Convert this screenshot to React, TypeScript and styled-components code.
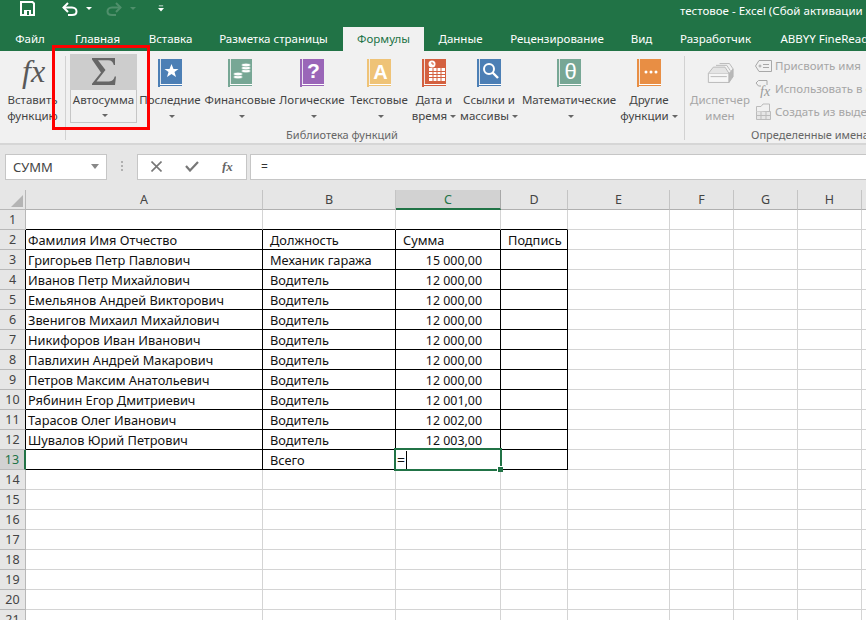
import React from "react";
import styled, { createGlobalStyle } from "styled-components";

const Global = createGlobalStyle`
  html, body { margin: 0; padding: 0; width: 866px; height: 620px; overflow: hidden; background: #fff; }
  * { box-sizing: border-box; }
`;
const UI = `"Noto Sans", "Open Sans", sans-serif`;

const Page = styled.div`width: 866px; height: 620px; overflow: hidden; display: flex; flex-direction: column; font-family: ${UI}; position: relative;`;
const TitleBar = styled.div`height: 27px; background: #217346; display: flex; align-items: flex-start; flex: none; overflow: hidden;`;
const Qat = styled.div`width: 680px; flex: none; display: flex; height: 17px; align-items: center;`;
const QatSlot = styled.span<{ $w: number }>`width: ${p => p.$w}px; flex: none; display: flex; justify-content: center; align-items: center;`;
const Title = styled.div`color: #fff; font-size: 11.5px; line-height: 22px; white-space: nowrap;`;
const Tabs = styled.div`height: 24px; background: #217346; display: flex; flex: none; overflow: hidden;`;
const Tab = styled.div<{ $w: number; $active?: boolean }>`
  width: ${p => p.$w}px; flex: none; text-align: center; font-size: 11.5px; line-height: 24px; white-space: nowrap;
  color: ${p => (p.$active ? "#217346" : "#fff")}; background: ${p => (p.$active ? "#f1f1f1" : "transparent")};
`;
const Ribbon = styled.div`height: 94px; background: #f1f1f1; border-bottom: 2px solid #d6d6d6; display: flex; flex: none; overflow: hidden;`;
const Group = styled.div<{ $w: number }>`width: ${p => p.$w}px; flex: none; display: flex; flex-direction: column;`;
const GroupRow = styled.div`display: flex; height: 77px;`;
const GroupLabel = styled.div`font-size: 11px; line-height: 14px; text-align: center; color: #666; white-space: nowrap;`;
const Sep = styled.div`width: 1px; height: 84px; margin-top: 5px; background: #d2d2d2; flex: none;`;
const Item = styled.div<{ $w: number; $ml?: number; $dim?: boolean }>`
  width: ${p => p.$w}px; margin-left: ${p => p.$ml ?? 0}px; flex: none; display: flex; flex-direction: column; align-items: center; padding-top: 8px;
  color: ${p => (p.$dim ? "#a6a6a6" : "#444")}; font-size: 11.5px; line-height: 16px; white-space: nowrap; text-align: center;
`;
const IconBox = styled.div`height: 28px; display: flex; align-items: center; justify-content: center; margin-bottom: 5px; flex: none;`;
const Caret = styled.i`display: inline-block; width: 0; height: 0; border-left: 3px solid transparent; border-right: 3px solid transparent; border-top: 3px solid #666; vertical-align: middle; margin-left: 3px;`;
const CaretLine = styled.div`height: 16px; display: flex; align-items: center; justify-content: center;`;
const Auto = styled.div`
  width: 67px; margin-left: 4px; margin-top: 3px; height: 69px; flex: none; display: flex; flex-direction: column; align-items: center;
  background: #f1f1f1; box-shadow: inset 0 -1px 0 #c6c6c6, inset 1px 0 0 #c6c6c6, inset -1px 0 0 #c6c6c6;
  color: #444; font-size: 11.5px; line-height: 16px; white-space: nowrap;
`;
const AutoTop = styled.div`width: 100%; height: 37px; background: #cdcdcd; display: flex; align-items: center; justify-content: center;`;
const AutoText = styled.div`padding-top: 2px;`;
const SmallList = styled.div`display: flex; flex-direction: column; padding-top: 3px;`;
const SmallItem = styled.div`height: 23px; display: flex; align-items: center; gap: 3px; color: #a6a6a6; font-size: 11.5px; white-space: nowrap;`;
const RedBox = styled.div`position: absolute; left: 52px; top: 45px; width: 98px; height: 85px; border: 3px solid #f00; pointer-events: none; z-index: 5;`;

const FormulaArea = styled.div`height: 45px; background: #e6e6e6; flex: none; display: flex; align-items: center; padding: 0 0 2px 5px;`;
const NameBox = styled.div`width: 102px; height: 26px; background: #fff; border: 1px solid #c6c6c6; display: flex; align-items: center; justify-content: space-between; padding: 0 7px; font-size: 13px; color: #444; flex: none;`;
const Grip = styled.div`width: 30px; display: flex; justify-content: center; flex: none;`;
const FxButtons = styled.div`width: 110px; height: 26px; background: #fff; border: 1px solid #c6c6c6; display: flex; align-items: center; flex: none;`;
const FxSlot = styled.span<{ $w: number }>`width: ${p => p.$w}px; flex: none; display: flex; justify-content: center; align-items: center;`;
const FxInput = styled.div`flex: 1; height: 26px; margin-left: 3px; background: #fff; border: 1px solid #c6c6c6; border-right: none; padding-left: 10px; line-height: 24px; font-size: 12px; color: #333;`;

const Sheet = styled.div`flex: 1; background: #fff; overflow: hidden;`;
const Row = styled.div`display: flex; height: 20px;`;
const Corner = styled.div`width: 26px; flex: none; background: #e6e6e6; border-right: 1px solid #b8b8b8; border-bottom: 1px solid #b8b8b8; position: relative; overflow: hidden;`;
const CornerMark = styled.svg`position: absolute; right: 2px; bottom: 2px;`;
const ColHead = styled.div<{ $w: number; $active?: boolean }>`
  width: ${p => p.$w}px; flex: none; font-size: 12.5px; line-height: 19px; text-align: center;
  color: ${p => (p.$active ? "#217346" : "#444")};
  background: ${p => (p.$active ? "#d2d2d2" : "#e6e6e6")};
  border-right: 1px solid ${p => (p.$active ? "#a8a8a8" : "#c4c4c4")};
  border-bottom: ${p => (p.$active ? "2px solid #217346" : "1px solid #b0b0b0")};
`;
const RowHead = styled.div<{ $active?: boolean; $black?: boolean }>`
  width: 26px; flex: none; font-size: 12.5px; line-height: 20px; text-align: center;
  color: ${p => (p.$active ? "#217346" : "#444")};
  background: ${p => (p.$active ? "#d2d2d2" : "#e6e6e6")};
  border-bottom: 1px solid #b8b8b8;
  border-right: ${p => (p.$active ? "2px solid #217346" : p.$black ? "1px solid #000" : "1px solid #b8b8b8")};
`;
const Cell = styled.div<{ $w: number; $right?: boolean; $rb?: boolean; $bb?: boolean; $pl?: number }>`
  width: ${p => p.$w}px; flex: none; position: relative; white-space: nowrap;
  font-size: ${p => (p.$right ? 12.4 : 12.8)}px; line-height: 21px; color: #111;
  padding: 0 ${p => (p.$right ? 18 : 2)}px 0 ${p => p.$pl ?? 2}px;
  text-align: ${p => (p.$right ? "right" : "left")};
  border-right: 1px solid ${p => (p.$rb ? "#000" : "#d4d4d4")};
  border-bottom: 1px solid ${p => (p.$bb ? "#000" : "#d4d4d4")};
`;
const Selection = styled.div`position: absolute; left: -2px; top: -2px; right: -2px; bottom: -2px; border: 2px solid #217346; z-index: 2; line-height: 20px;`;
const Handle = styled.div`position: absolute; right: -3px; bottom: -3px; width: 6px; height: 6px; background: #217346; border: 1px solid #fff; border-right: none; border-bottom: none;`;
const CaretBar = styled.i`display: inline-block; width: 1px; height: 18px; background: #000; vertical-align: -4px; margin-left: 1px;`;
const EqText = styled.span`margin-left: 1px; font-size: 14px;`;

const widths = [237, 133, 105, 67, 102, 64, 64, 64, 20];
const letters = ["A", "B", "C", "D", "E", "F", "G", "H", ""];

const data: [string, string, string][] = [
  ["Фамилия Имя Отчество", "Должность", "Сумма"],
  ["Григорьев Петр Павлович", "Механик гаража", "15 000,00"],
  ["Иванов Петр Михайлович", "Водитель", "12 000,00"],
  ["Емельянов Андрей Викторович", "Водитель", "12 000,00"],
  ["Звенигов Михаил Михайлович", "Водитель", "12 000,00"],
  ["Никифоров Иван Иванович", "Водитель", "12 000,00"],
  ["Павлихин Андрей Макарович", "Водитель", "12 000,00"],
  ["Петров Максим Анатольевич", "Водитель", "12 000,00"],
  ["Рябинин Егор Дмитриевич", "Водитель", "12 001,00"],
  ["Тарасов Олег Иванович", "Водитель", "12 002,00"],
  ["Шувалов Юрий Петрович", "Водитель", "12 003,00"],
];

const Book = ({ color, children }: { color: string; children?: React.ReactNode }) => (
  <svg width="24" height="28" viewBox="0 0 24 28">
    <rect x="0" y="0" width="24" height="25" fill={color} />
    <rect x="0" y="0" width="2" height="28" fill={color} />
    <rect x="2" y="0" width="1" height="25" fill="#f4f4f4" opacity="0.85" />
    <rect x="2" y="25" width="22" height="1" fill="#fff" />
    <rect x="1" y="26" width="23" height="1" fill={color} />
    {children}
  </svg>
);

const FxIcon = () => (
  <svg width="28" height="34" viewBox="0 0 28 34">
    <text x="3" y="26" fontFamily='"Liberation Serif", serif' fontStyle="italic" fontSize="32" fill="#595959">fx</text>
  </svg>
);

const Sigma = () => (
  <svg width="25" height="27" viewBox="0 0 25 27">
    <path d="M1 0H24V7H22.8C22 4 20.5 2.2 17 2.2H7L14.5 12L5.5 23.4H18C21.5 23.4 23 21.5 23.7 18.5H25L24 27H1V25.8L10 14.5L1 1.6Z" fill="#666" />
  </svg>
);

const Manager = () => (
  <svg width="27" height="20" viewBox="0 0 30 22" fill="none" stroke="#b4b4b4">
    <path d="M1.5 11.5V21.5H24.5V11.5Z" fill="#f6f6f6" />
    <path d="M1.5 11.5L7 4.5H20L24.5 11.5" fill="#e4e4e4" />
    <path d="M10 2.5H22L26 8.5M14 .5H25L29 6.5" />
    <path d="M24.5 21.5L29 15V6.5L24.5 11.5Z" fill="#b8b8b8" />
    <path d="M4 15H22" />
  </svg>
);

const Icons = {
  name: (
    <svg width="17" height="12" viewBox="0 0 17 12" fill="none" stroke="#a8a8a8">
      <path d="M4 .5H16.5V11.5H4L.5 6Z" />
      <circle cx="5" cy="6" r="1" />
      <path d="M8 4.5H14M8 7.5H14" />
    </svg>
  ),
  use: (
    <svg width="17" height="18" viewBox="0 0 17 18" fill="none" stroke="#a8a8a8">
      <path d="M1 3L3.5 .5H12V5M1 3L3.5 6H6" />
      <text x="5" y="16" fontFamily='"Liberation Serif", serif' fontStyle="italic" fontSize="14" fill="#999" stroke="none">fx</text>
    </svg>
  ),
  create: (
    <svg width="17" height="17" viewBox="0 0 17 17" fill="none" stroke="#bbb">
      <path d="M1.5 8.5H15.5V16.5H1.5ZM1.5 12.5H15.5M6 8.5V16.5M11 8.5V16.5" fill="#e6e6e6" />
      <path d="M1.5 8.5V3.5H6L8 1H14.5V8" fill="#f1f1f1" />
    </svg>
  ),
};

const Save = () => (
  <svg width="15" height="15" viewBox="0 0 15 15" fill="none">
    <path d="M1 1H12.5L14 2.5V14H1Z" stroke="#fff" strokeWidth="2" />
    <rect x="3" y="2" width="9" height="4" fill="#217346" />
    <rect x="4" y="9" width="7" height="5" fill="#fff" />
    <rect x="7" y="10" width="2" height="4" fill="#217346" />
  </svg>
);
const Undo = ({ c }: { c: string }) => (
  <svg width="16" height="14" viewBox="0 0 16 14" fill="none" stroke={c} strokeWidth="2">
    <path d="M1.5 5.5H10C13 5.5 14.5 7.5 14.5 9.5C14.5 11.5 13 13 10 13H6" />
    <path d="M6 1L1.5 5.5L6 10" />
  </svg>
);
const Redo = ({ c }: { c: string }) => (
  <svg width="16" height="14" viewBox="0 0 16 14" fill="none" stroke={c} strokeWidth="2">
    <path d="M14.5 5.5H6C3 5.5 1.5 7.5 1.5 9.5C1.5 11.5 3 13 6 13H10" />
    <path d="M10 1L14.5 5.5L10 10" />
  </svg>
);
const QatCaret = ({ c }: { c: string }) => (
  <svg width="6" height="3" viewBox="0 0 6 3"><path d="M0 0H6L3 3Z" fill={c} /></svg>
);
const Customize = () => (
  <svg width="7" height="7" viewBox="0 0 7 7"><path d="M1 0H6V1H1ZM0 3H7L3.5 7Z" fill="#fff" /></svg>
);

const labels = (l: string[], caretInline: boolean) =>
  l.length === 1 ? (
    <>
      <div>{l[0]}</div>
      <CaretLine><Caret /></CaretLine>
    </>
  ) : (
    <>
      <div>{l[0]}</div>
      <div>{l[1]}{caretInline && <Caret />}</div>
    </>
  );

const W = "#fff";
const Coin = ({ x, y, c }: { x: number; y: number; c: string }) => (
  <ellipse cx={x} cy={y} rx="4.5" ry="1.8" fill={W} stroke={c} strokeWidth="0.6" />
);
const items: { w: number; l: string[]; icon: React.ReactNode; inline: boolean; ml?: number }[] = [
  { w: 64, l: ["Последние"], inline: false, ml: 1, icon: <Book color="#4c7fb5"><path d="M13.5 5L15.5 10H20.5L16.5 13L18 18L13.5 15L9 18L10.5 13L6.5 10H11.5Z" fill={W} /></Book> },
  { w: 72, l: ["Финансовые"], inline: false, ml: 2, icon: <Book color="#77a795"><Coin x={18} y={12} c="#77a795" /><Coin x={18} y={9} c="#77a795" /><Coin x={18} y={6} c="#77a795" /><Coin x={10} y={18} c="#77a795" /><Coin x={10} y={15} c="#77a795" /></Book> },
  { w: 66, l: ["Логические"], inline: false, ml: 3, icon: <Book color="#9a66b8"><text x="13.5" y="19" textAnchor="middle" fontFamily='"Liberation Sans", sans-serif' fontWeight="700" fontSize="21" fill={W}>?</text></Book> },
  { w: 62, l: ["Текстовые"], inline: false, ml: 3, icon: <Book color="#efc377"><text x="13.5" y="20" textAnchor="middle" fontFamily='"Liberation Sans", sans-serif' fontWeight="700" fontSize="20" fill={W}>A</text></Book> },
  { w: 46, l: ["Дата и", "время"], inline: true, ml: 1, icon: <Book color="#d4603f"><circle cx="10" cy="5" r="3.5" fill={W} /><path d="M10 3V5H12" stroke="#d4603f" fill="none" /><path d="M7 9H23V22H7Z" fill={W} /><path d="M7 12.5H23M7 15.5H23M7 18.5H23M11 9V22M15 9V22M19 9V22" stroke="#d4603f" /></Book> },
  { w: 62, l: ["Ссылки и", "массивы"], inline: true, ml: 1, icon: <Book color="#4c7fb5"><circle cx="12" cy="10" r="5" fill="none" stroke={W} strokeWidth="2" /><path d="M15.5 13.5L21 19" stroke={W} strokeWidth="2.4" /></Book> },
  { w: 94, l: ["Математические"], inline: false, ml: 2, icon: <Book color="#77a795"><text x="13.5" y="20" textAnchor="middle" fontFamily='"Liberation Sans", sans-serif' fontSize="22" fill={W}>θ</text></Book> },
  { w: 64, l: ["Другие", "функции"], inline: true, ml: 1, icon: <Book color="#e88e44"><circle cx="9" cy="13" r="1.5" fill={W} /><circle cx="14" cy="13" r="1.5" fill={W} /><circle cx="19" cy="13" r="1.5" fill={W} /></Book> },
];

export default function App() {
  return (
    <Page>
      <Global />
      <TitleBar>
        <Qat>
          <QatSlot $w={54}><Save /></QatSlot>
          <QatSlot $w={8} />
          <QatSlot $w={16}><Undo c="#fff" /></QatSlot>
          <QatSlot $w={8} />
          <QatSlot $w={6}><QatCaret c="#ffffff" /></QatSlot>
          <QatSlot $w={14} />
          <QatSlot $w={16}><Redo c="#4f8f6b" /></QatSlot>
          <QatSlot $w={8} />
          <QatSlot $w={6}><QatCaret c="#4f8f6b" /></QatSlot>
          <QatSlot $w={22} />
          <QatSlot $w={6}><Customize /></QatSlot>
        </Qat>
        <Title>тестовое - Excel (Сбой активации продукта)</Title>
      </TitleBar>
      <Tabs>
        <Tab $w={60}>Файл</Tab>
        <Tab $w={75}>Главная</Tab>
        <Tab $w={71}>Вставка</Tab>
        <Tab $w={135}>Разметка страницы</Tab>
        <Tab $w={2} />
        <Tab $w={81} $active>Формулы</Tab>
        <Tab $w={73}>Данные</Tab>
        <Tab $w={120}>Рецензирование</Tab>
        <Tab $w={49}>Вид</Tab>
        <Tab $w={99}>Разработчик</Tab>
        <Tab $w={130}>ABBYY FineReader</Tab>
      </Tabs>
      <Ribbon>
        <Group $w={684}>
          <GroupRow>
            <Item $w={65}>
              <IconBox><FxIcon /></IconBox>
              <div>Вставить</div>
              <div>функцию</div>
            </Item>
            <Sep />
            <Auto>
              <AutoTop><Sigma /></AutoTop>
              <AutoText>Автосумма</AutoText>
              <CaretLine><Caret /></CaretLine>
            </Auto>
            {items.map((it, i) => (
              <Item key={i} $w={it.w} $ml={it.ml}>
                <IconBox>{it.icon}</IconBox>
                {labels(it.l, it.inline)}
              </Item>
            ))}
          </GroupRow>
          <GroupLabel>Библиотека функций</GroupLabel>
        </Group>
        <Sep />
        <Group $w={250}>
          <GroupRow>
            <Item $w={70} $dim>
              <IconBox><Manager /></IconBox>
              <div>Диспетчер</div>
              <div>имен</div>
            </Item>
            <SmallList>
              <SmallItem>{Icons.name}<span>Присвоить имя</span></SmallItem>
              <SmallItem>{Icons.use}<span>Использовать в формуле</span></SmallItem>
              <SmallItem>{Icons.create}<span>Создать из выделенного</span></SmallItem>
            </SmallList>
          </GroupRow>
          <GroupLabel>Определенные имена</GroupLabel>
        </Group>
      </Ribbon>
      <RedBox />
      <FormulaArea>
        <NameBox>
          <span>СУММ</span>
          <svg width="8" height="5" viewBox="0 0 8 5"><path d="M0 0H8L4 5Z" fill="#888" /></svg>
        </NameBox>
        <Grip>
          <svg width="3" height="11" viewBox="0 0 3 11" fill="#b0b0b0"><rect x="0" y="0" width="2" height="2" /><rect x="0" y="4" width="2" height="2" /><rect x="0" y="8" width="2" height="2" /></svg>
        </Grip>
        <FxButtons>
          <FxSlot $w={36}>
            <svg width="11" height="11" viewBox="0 0 11 11" stroke="#777" strokeWidth="1.6"><path d="M.5 .5L10.5 10.5M10.5 .5L.5 10.5" /></svg>
          </FxSlot>
          <FxSlot $w={36}>
            <svg width="14" height="11" viewBox="0 0 14 11" fill="none" stroke="#777" strokeWidth="2.2"><path d="M1 5L5 9.5L13 1" /></svg>
          </FxSlot>
          <FxSlot $w={36}>
            <svg width="13" height="13" viewBox="0 0 13 13"><text x="0" y="11" fontFamily='"Liberation Serif", serif' fontStyle="italic" fontWeight="700" fontSize="13" fill="#666">fx</text></svg>
          </FxSlot>
        </FxButtons>
        <FxInput>=</FxInput>
      </FormulaArea>
      <Sheet>
        <Row>
          <Corner>
            <CornerMark width="12" height="12" viewBox="0 0 12 12"><path d="M12 0V12H0Z" fill="#b4b4b4" /></CornerMark>
          </Corner>
          {letters.map((l, i) => <ColHead key={i} $w={widths[i]} $active={i === 2}>{l}</ColHead>)}
        </Row>
        {Array.from({ length: 21 }, (_, r) => {
          const n = r + 1;
          const inTable = n >= 2 && n <= 13;
          const rec = n >= 2 && n <= 12 ? data[n - 2] : null;
          return (
            <Row key={n}>
              <RowHead $active={n === 13} $black={inTable}>{n}</RowHead>
              {widths.map((w, c) => {
                const boxed = c <= 3;
                const rb = inTable && boxed;
                const bb = n <= 13 && boxed;
                let content: React.ReactNode = null;
                if (rec && c < 3) content = rec[c];
                if (n === 2 && c === 3) content = "Подпись";
                if (n === 13 && c === 1) content = "Всего";
                const right = c === 2 && n >= 3 && n <= 12;
                const pl = n === 2 && (c === 2 || c === 3) ? 7 : c === 1 ? 7 : 2;
                return (
                  <Cell key={c} $w={w} $rb={rb} $bb={bb} $right={right} $pl={pl}>
                    {content}
                    {n === 13 && c === 2 && (
                      <Selection>
                        <EqText>=</EqText><CaretBar />
                        <Handle />
                      </Selection>
                    )}
                  </Cell>
                );
              })}
            </Row>
          );
        })}
      </Sheet>
    </Page>
  );
}
